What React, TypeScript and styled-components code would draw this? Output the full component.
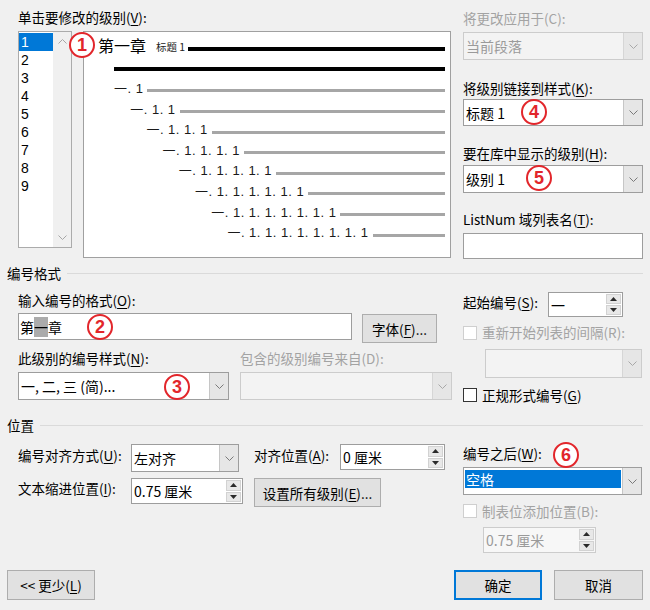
import React from 'react';
import styled, { createGlobalStyle } from 'styled-components';

const GlobalStyle = createGlobalStyle`
  html, body {
    margin: 0;
    padding: 0;
    background: #f0f0f0;
  }
  body {
    font-family: "Noto Sans CJK SC", "Liberation Sans", sans-serif;
    font-size: 13.5px;
    color: #000;
  }
  u {
    text-underline-offset: 2px;
  }
`;

const Dialog = styled.div`
  width: 650px;
  height: 610px;
  box-sizing: border-box;
  padding: 9px 7px 10px;
  display: flex;
  flex-direction: column;
`;

const Columns = styled.div<{ $mt?: number }>`
  display: flex;
  gap: 11px;
  padding-left: 11px;
  margin-top: ${p => p.$mt ?? 0}px;
`;

const LeftPane = styled.div`
  width: 434px;
  display: flex;
  flex-direction: column;
`;

const RightPane = styled.div`
  width: 180px;
  display: flex;
  flex-direction: column;
`;

const InlineRow = styled.div<{ $mt?: number; $gap?: number }>`
  display: flex;
  align-items: flex-start;
  gap: ${p => p.$gap ?? 0}px;
  margin-top: ${p => p.$mt ?? 0}px;
`;

const Label = styled.div<{ $mt?: number; $ml?: number; $w?: number; $disabled?: boolean }>`
  position: relative;
  height: 17px;
  line-height: 17px;
  white-space: nowrap;
  flex-shrink: 0;
  margin-top: ${p => p.$mt ?? 0}px;
  margin-left: ${p => p.$ml ?? 0}px;
  width: ${p => (p.$w ? `${p.$w}px` : 'auto')};
  color: ${p => (p.$disabled ? '#a3a3a3' : '#000')};
`;

const SectionHeader = styled.div<{ $mt: number }>`
  display: flex;
  align-items: center;
  gap: 6px;
  height: 17px;
  line-height: 17px;
  white-space: nowrap;
  margin-top: ${p => p.$mt}px;

  &::after {
    content: '';
    flex: 1;
    height: 1px;
    background: #dadada;
  }
`;

/* annotation badge laid over the dialog */
const Badge = styled.span<{ $x: number; $y: number }>`
  position: absolute;
  left: ${p => p.$x}px;
  top: ${p => p.$y}px;
  z-index: 2;
  width: 26px;
  height: 26px;
  box-sizing: border-box;
  border-radius: 50%;
  border: 2.5px solid #e2262b;
  background: #fff;
  color: #e2262b;
  font-family: "Liberation Sans", sans-serif;
  font-weight: bold;
  font-size: 18px;
  line-height: 1;
  display: flex;
  align-items: center;
  justify-content: center;
`;

/* level list + preview */
const PickerRow = styled.div`
  display: flex;
  align-items: flex-start;
  gap: 11px;
  margin-top: 5px;
`;

const LevelList = styled.div`
  width: 54px;
  height: 217px;
  box-sizing: border-box;
  border: 1px solid #ababab;
  background: #fff;
  display: flex;
`;

const LevelItems = styled.div`
  flex: 1;
  padding-top: 1px;
`;

const LevelItem = styled.div<{ $selected?: boolean }>`
  height: 18px;
  line-height: 18px;
  padding-left: 2px;
  font-family: "Liberation Sans", sans-serif;
  font-size: 14px;
  background: ${p => (p.$selected ? '#0078d7' : 'transparent')};
  color: ${p => (p.$selected ? '#fff' : '#000')};
`;

const ScrollTrack = styled.div`
  width: 18px;
  background: #f0f0f0;
  display: flex;
  flex-direction: column;
  justify-content: space-between;
  align-items: center;
  padding: 7px 0;
`;

const Preview = styled.div`
  position: relative;
  width: 368px;
  height: 227px;
  box-sizing: border-box;
  border: 1px solid #a0a0a0;
  background: #fff;
  padding-right: 5px;
`;

const TitleRow = styled.div`
  height: 26px;
  display: flex;
  align-items: center;
  padding-left: 14px;
`;

const ChapterText = styled.span`
  font-size: 16px;
  line-height: 20px;
`;

const StyleTag = styled.span`
  font-size: 10.5px;
  line-height: 13px;
  margin: 3px 0 0 10px;
  color: #222;
`;

const Rule = styled.div<{ $heavy?: boolean; $mt?: number; $ml?: number }>`
  flex: 1;
  height: ${p => (p.$heavy ? 4 : 3)}px;
  background: ${p => (p.$heavy ? '#000' : '#a6a6a6')};
  margin-top: ${p => p.$mt ?? 0}px;
  margin-left: ${p => p.$ml ?? 0}px;
`;

const RuleRow = styled.div`
  height: 21.7px;
  display: flex;
  align-items: center;
  padding-left: 30px;
`;

const LevelLine = styled.div<{ $indent: number }>`
  height: 20.6px;
  display: flex;
  align-items: center;
  padding-left: ${p => p.$indent}px;
`;

const LevelNum = styled.span`
  font-family: "Liberation Sans", "Noto Sans CJK SC", sans-serif;
  font-size: 13px;
  letter-spacing: 0.5px;
  line-height: 16px;
  white-space: pre;
  color: #1a1a1a;
  margin-top: -2px;
`;

/* form controls */
const SelectBox = styled.div<{ $w: number; $h: number; $disabled?: boolean; $mt?: number; $ml?: number }>`
  position: relative;
  width: ${p => p.$w}px;
  height: ${p => p.$h}px;
  box-sizing: border-box;
  flex-shrink: 0;
  margin-top: ${p => p.$mt ?? 0}px;
  margin-left: ${p => p.$ml ?? 0}px;
  border: 1px solid ${p => (p.$disabled ? '#cccccc' : '#9d9d9d')};
  background: ${p => (p.$disabled ? '#f3f3f3' : '#fff')};
  display: flex;
`;

const SelectValue = styled.div<{ $disabled?: boolean; $highlight?: boolean }>`
  flex: 1;
  display: flex;
  align-items: ${p => (p.$highlight ? 'flex-start' : 'center')};
  padding-left: ${p => (p.$highlight ? 1 : 2)}px;
  font-size: 14px;
  white-space: nowrap;
  overflow: hidden;
  color: ${p => (p.$disabled ? '#9a9a9a' : '#000')};
`;

const Highlight = styled.div`
  flex: 1;
  margin: 2px 1px 0 0;
  height: 18px;
  line-height: 18px;
  padding-left: 1px;
  background: #0078d7;
  color: #fff;
`;

const ArrowButton = styled.div<{ $disabled?: boolean }>`
  width: 18px;
  border-left: 1px solid ${p => (p.$disabled ? '#d6d6d6' : '#c6c6c6')};
  background: #e6e6e6;
  display: flex;
  align-items: center;
  justify-content: center;
`;

const TextBox = styled.div<{ $w: number; $h: number; $mt?: number }>`
  position: relative;
  width: ${p => p.$w}px;
  height: ${p => p.$h}px;
  box-sizing: border-box;
  flex-shrink: 0;
  margin-top: ${p => p.$mt ?? 0}px;
  border: 1px solid #9d9d9d;
  background: #fff;
  display: flex;
  align-items: center;
  padding-left: 1px;
  font-size: 14px;
`;

const Mark = styled.span`
  background: #ababab;
`;

const SpinBox = styled.div<{ $w: number; $h: number; $disabled?: boolean; $mt?: number; $ml?: number }>`
  width: ${p => p.$w}px;
  height: ${p => p.$h}px;
  box-sizing: border-box;
  flex-shrink: 0;
  margin-top: ${p => p.$mt ?? 0}px;
  margin-left: ${p => p.$ml ?? 0}px;
  border: 1px solid ${p => (p.$disabled ? '#cccccc' : '#9d9d9d')};
  background: ${p => (p.$disabled ? '#f7f7f7' : '#fff')};
  display: flex;
`;

const SpinValue = styled.div<{ $disabled?: boolean }>`
  flex: 1;
  display: flex;
  align-items: center;
  padding-left: 2px;
  font-size: 14px;
  white-space: nowrap;
  color: ${p => (p.$disabled ? '#9a9a9a' : '#000')};
`;

const SpinButtons = styled.div`
  width: 15px;
  display: flex;
  flex-direction: column;
  gap: 1px;
  padding: 1px 1px 1px 0;
`;

const SpinButton = styled.div`
  flex: 1;
  background: #e8e8e8;
  border: 1px solid #d2d2d2;
  display: flex;
  align-items: center;
  justify-content: center;
`;

const CheckRow = styled.div<{ $mt?: number }>`
  display: flex;
  align-items: center;
  gap: 5px;
  height: 17px;
  margin-top: ${p => p.$mt ?? 0}px;
`;

const CheckBox = styled.div<{ $disabled?: boolean }>`
  width: 14px;
  height: 14px;
  box-sizing: border-box;
  border: 1px solid ${p => (p.$disabled ? '#cfcfcf' : '#333')};
  background: #fff;
`;

const Button = styled.button<{ $w: number; $h?: number; $primary?: boolean; $mt?: number; $ml?: number }>`
  width: ${p => p.$w}px;
  height: ${p => p.$h ?? 30}px;
  box-sizing: border-box;
  flex-shrink: 0;
  margin: ${p => p.$mt ?? 0}px 0 0 ${p => p.$ml ?? 0}px;
  padding: 0;
  font-family: inherit;
  font-size: 13.5px;
  color: #000;
  background: #e1e1e1;
  border: 1px solid ${p => (p.$primary ? '#0078d7' : '#adadad')};
  box-shadow: ${p => (p.$primary ? 'inset 0 0 0 1px #0078d7' : 'none')};
`;

const Footer = styled.div`
  margin-top: auto;
  display: flex;
  justify-content: space-between;
`;

const ButtonGroup = styled.div`
  display: flex;
  gap: 12px;
`;

const Chevron = ({ up, color = '#7a7a7a' }: { up?: boolean; color?: string }) => (
  <svg width="9" height="5" viewBox="0 0 9 5">
    <polyline
      points={up ? '0.5,4.5 4.5,0.5 8.5,4.5' : '0.5,0.5 4.5,4.5 8.5,0.5'}
      fill="none"
      stroke={color}
      strokeWidth="1"
    />
  </svg>
);

const Triangle = ({ up }: { up?: boolean }) => (
  <svg width="7" height="4" viewBox="0 0 7 4">
    <polygon points={up ? '0,4 3.5,0 7,4' : '0,0 3.5,4 7,0'} fill="#2a2a2a" />
  </svg>
);

type SelectProps = {
  w: number;
  h: number;
  value?: string;
  disabled?: boolean;
  highlight?: boolean;
  mt?: number;
  ml?: number;
  children?: React.ReactNode;
};

const Select = ({ w, h, value, disabled, highlight, mt, ml, children }: SelectProps) => (
  <SelectBox $w={w} $h={h} $disabled={disabled} $mt={mt} $ml={ml}>
    <SelectValue $disabled={disabled} $highlight={highlight}>
      {highlight ? <Highlight>{value}</Highlight> : value}
    </SelectValue>
    <ArrowButton $disabled={disabled}>
      <Chevron color={disabled ? '#a8a8a8' : '#7a7a7a'} />
    </ArrowButton>
    {children}
  </SelectBox>
);

type SpinProps = { w: number; h: number; value: string; disabled?: boolean; mt?: number; ml?: number };

const Spin = ({ w, h, value, disabled, mt, ml }: SpinProps) => (
  <SpinBox $w={w} $h={h} $disabled={disabled} $mt={mt} $ml={ml}>
    <SpinValue $disabled={disabled}>{value}</SpinValue>
    <SpinButtons>
      <SpinButton>
        <Triangle up />
      </SpinButton>
      <SpinButton>
        <Triangle />
      </SpinButton>
    </SpinButtons>
  </SpinBox>
);

const levels = [1, 2, 3, 4, 5, 6, 7, 8, 9];
const previewLevels = [1, 2, 3, 4, 5, 6, 7, 8];

const App = () => {
  return (
    <>
      <GlobalStyle />
      <Dialog>
        <Columns>
          <LeftPane>
            <Label>
              单击要修改的级别(<u>V</u>):
            </Label>
            <PickerRow>
              <LevelList>
                <LevelItems>
                  {levels.map(n => (
                    <LevelItem key={n} $selected={n === 1}>
                      {n}
                    </LevelItem>
                  ))}
                </LevelItems>
                <ScrollTrack>
                  <Chevron up color="#a6a6a6" />
                  <Chevron color="#a6a6a6" />
                </ScrollTrack>
              </LevelList>
              <Preview>
                <Badge $x={-15} $y={0}>1</Badge>
                <TitleRow>
                  <ChapterText>第一章</ChapterText>
                  <StyleTag>标题 1</StyleTag>
                  <Rule $heavy $mt={7} $ml={3} />
                </TitleRow>
                <RuleRow>
                  <Rule $heavy />
                </RuleRow>
                {previewLevels.map(n => (
                  <LevelLine key={n} $indent={30 + (n - 1) * 16.2}>
                    <LevelNum>{'一' + '. 1'.repeat(n)}</LevelNum>
                    <Rule $mt={2} $ml={4} />
                  </LevelLine>
                ))}
              </Preview>
            </PickerRow>
          </LeftPane>

          <RightPane>
            <Label $mt={1} $disabled>
              将更改应用于(C):
            </Label>
            <Select w={180} h={28} mt={5} value="当前段落" disabled />
            <Label $mt={20}>
              将级别链接到样式(<u>K</u>):
            </Label>
            <Select w={180} h={27} mt={2} value="标题 1">
              <Badge $x={57} $y={-1}>4</Badge>
            </Select>
            <Label $mt={19}>
              要在库中显示的级别(<u>H</u>):
            </Label>
            <Select w={180} h={28} mt={3} value="级别 1">
              <Badge $x={62} $y={-1}>5</Badge>
            </Select>
            <Label $mt={18}>
              ListNum 域列表名(<u>T</u>):
            </Label>
            <TextBox $w={180} $h={26} $mt={5} />
          </RightPane>
        </Columns>

        <SectionHeader $mt={5.5}>编号格式</SectionHeader>
        <Columns $mt={10}>
          <LeftPane>
            <Label>
              输入编号的格式(<u>O</u>):
            </Label>
            <InlineRow $mt={4.5}>
              <TextBox $w={334} $h={27}>
                第<Mark>一</Mark>章
                <Badge $x={68} $y={0}>2</Badge>
              </TextBox>
              <Button $w={75} $h={29} $mt={1} $ml={10}>
                字体(<u>F</u>)...
              </Button>
            </InlineRow>
            <InlineRow $mt={6.5}>
              <Label $w={222}>
                此级别的编号样式(<u>N</u>):
              </Label>
              <Label $disabled>包含的级别编号来自(D):</Label>
            </InlineRow>
            <InlineRow $mt={5.5} $gap={11}>
              <Select w={211} h={28} value="一, 二, 三 (简)...">
                <Badge $x={145} $y={1}>3</Badge>
              </Select>
              <Select w={212} h={28} disabled />
            </InlineRow>
          </LeftPane>

          <RightPane>
            <InlineRow $mt={0.5}>
              <Label $w={85} $mt={2}>
                起始编号(<u>S</u>):
              </Label>
              <Spin w={75} h={25} value="一" />
            </InlineRow>
            <CheckRow $mt={7}>
              <CheckBox $disabled />
              <Label $disabled>重新开始列表的间隔(R):</Label>
            </CheckRow>
            <Select w={157} h={29} mt={8} ml={22} disabled />
            <CheckRow $mt={8.5}>
              <CheckBox />
              <Label>
                正规形式编号(<u>G</u>)
              </Label>
            </CheckRow>
          </RightPane>
        </Columns>

        <SectionHeader $mt={13}>位置</SectionHeader>
        <Columns $mt={10.5}>
          <LeftPane>
            <InlineRow>
              <Label $w={113} $mt={2.5}>
                编号对齐方式(<u>U</u>):
              </Label>
              <Select w={108} h={28} value="左对齐" />
              <Label $w={86} $ml={15} $mt={2.5}>
                对齐位置(<u>A</u>):
              </Label>
              <Spin w={105} h={26} value="0 厘米" />
            </InlineRow>
            <InlineRow $mt={6}>
              <Label $w={113} $mt={1.5}>
                文本缩进位置(<u>I</u>):
              </Label>
              <Spin w={112} h={26} value="0.75 厘米" />
              <Button $w={127} $h={29} $ml={11}>
                设置所有级别(<u>E</u>)...
              </Button>
            </InlineRow>
          </LeftPane>

          <RightPane>
            <Label $mt={1}>
              编号之后(<u>W</u>):
              <Badge $x={90} $y={-3}>6</Badge>
            </Label>
            <Select w={179} h={28} mt={5} value="空格" highlight />
            <CheckRow $mt={7.5}>
              <CheckBox $disabled />
              <Label $disabled>制表位添加位置(B):</Label>
            </CheckRow>
            <Spin w={113} h={26} mt={7.5} ml={20} value="0.75 厘米" disabled />
          </RightPane>
        </Columns>

        <Footer>
          <Button $w={88}>
            {'<< 更少('}
            <u>L</u>)
          </Button>
          <ButtonGroup>
            <Button $w={88} $primary>
              确定
            </Button>
            <Button $w={89}>取消</Button>
          </ButtonGroup>
        </Footer>
      </Dialog>
    </>
  );
};

export default App;
